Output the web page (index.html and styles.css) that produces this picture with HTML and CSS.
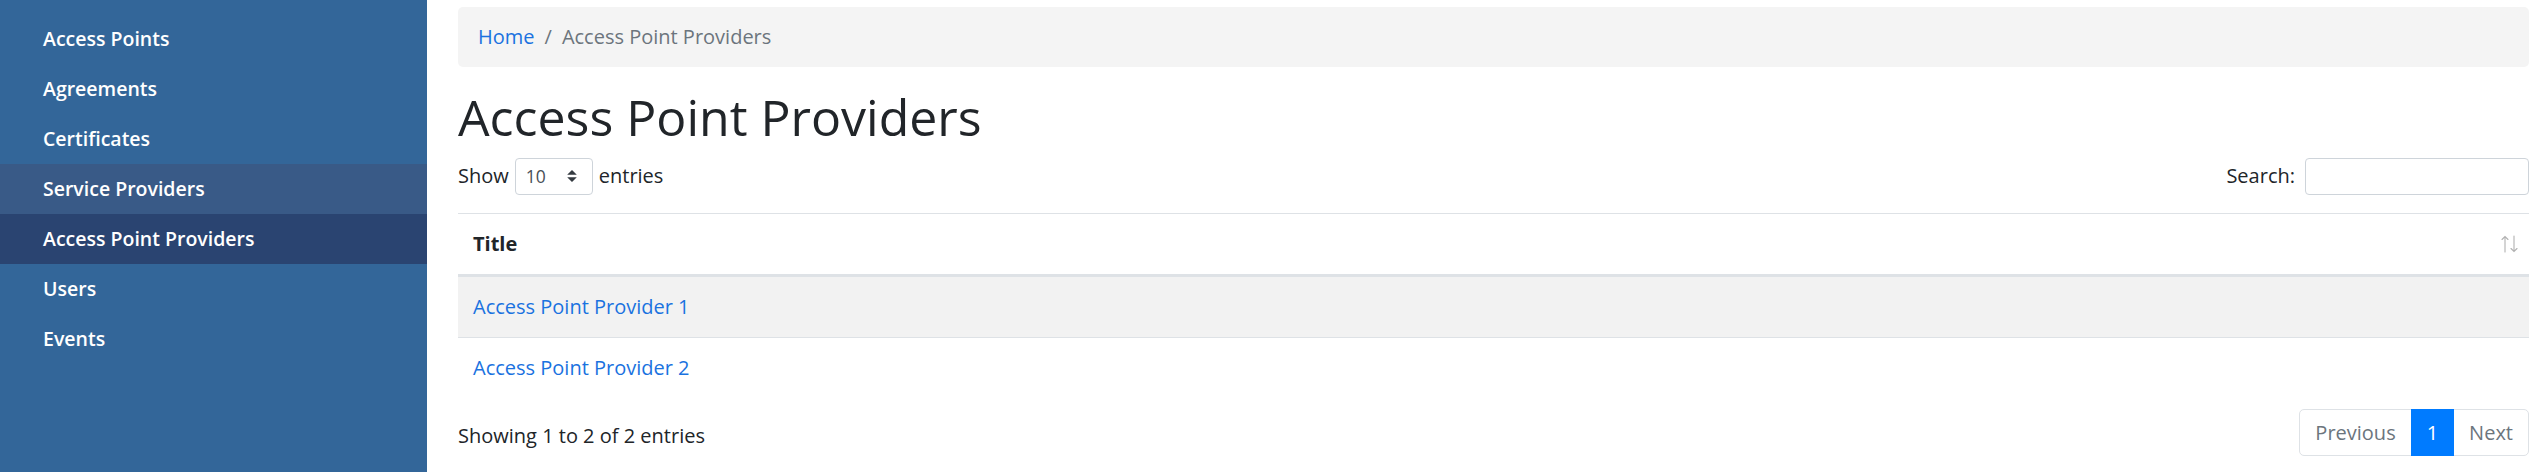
FILE: index.html
```html
<!DOCTYPE html>
<html lang="en">
<head>
<meta charset="utf-8">
<title>Access Point Providers</title>
<link rel="stylesheet" href="styles.css">
</head>
<body>
<div class="layout">
  <nav class="sidebar">
    <ul class="nav">
      <li><a class="nav-link" href="#">Access Points</a></li>
      <li><a class="nav-link" href="#">Agreements</a></li>
      <li><a class="nav-link" href="#">Certificates</a></li>
      <li><a class="nav-link hover" href="#">Service Providers</a></li>
      <li><a class="nav-link active" href="#">Access Point Providers</a></li>
      <li><a class="nav-link" href="#">Users</a></li>
      <li><a class="nav-link" href="#">Events</a></li>
    </ul>
  </nav>
  <main class="main">
    <ol class="breadcrumb">
      <li class="breadcrumb-item"><a href="#">Home</a></li>
      <li class="breadcrumb-item current">Access Point Providers</li>
    </ol>
    <h1 class="page-title">Access Point Providers</h1>
    <div class="controls">
      <div class="length">
        <span>Show</span>
        <div class="len-select"><span>10</span>
          <svg class="select-arrows" width="10" height="12" viewBox="0 0 4 5"><path d="M2 0L0 2h4zm0 5L0 3h4z" fill="#343a40"/></svg>
        </div>
        <span>entries</span>
      </div>
      <div class="filter">
        <span>Search:</span>
        <input class="search-input" type="text">
      </div>
    </div>
    <table class="data-table">
      <thead>
        <tr><th><div class="th-inner"><span>Title</span>
          <svg class="sort-icon" width="17" height="18" viewBox="0 0 17 18"><g fill="none" stroke="#000" stroke-width="1.1" stroke-linecap="round"><path d="M4 1.5V17M1 4.5L4 1.5L7 4.5"/><path d="M13 1V16.5M10 13.5L13 16.5L16 13.5"/></g></svg>
        </div></th></tr>
      </thead>
      <tbody>
        <tr class="odd"><td><a href="#">Access Point Provider 1</a></td></tr>
        <tr><td><a href="#">Access Point Provider 2</a></td></tr>
      </tbody>
    </table>
    <div class="table-footer">
      <div class="info">Showing 1 to 2 of 2 entries</div>
      <ul class="pagination">
        <li><a class="page-link first" href="#">Previous</a></li>
        <li><a class="page-link active" href="#">1</a></li>
        <li><a class="page-link last" href="#">Next</a></li>
      </ul>
    </div>
  </main>
</div>
</body>
</html>
```

FILE: styles.css
```css
html, body {
  margin: 0;
  padding: 0;
}
body {
  font-family: "Open Sans", "Noto Sans", sans-serif;
  font-size: 20px;
  line-height: 1.5;
  color: #212529;
  background: #fff;
}
a {
  color: #1a72e0;
  text-decoration: none;
}
.layout {
  display: flex;
  min-height: 100vh;
}
.sidebar {
  width: 427px;
  flex-shrink: 0;
  background: #336699;
  padding-top: 14px;
  box-sizing: border-box;
}
.nav {
  list-style: none;
  margin: 0;
  padding: 0;
}
.nav-link {
  display: block;
  height: 50px;
  line-height: 50px;
  padding: 0 43px;
  color: #fff;
  font-size: 19.5px;
  font-weight: 600;
}
.nav-link.hover {
  background: #395a87;
}
.nav-link.active {
  background: #2a4471;
}
.main {
  flex: 1;
  min-width: 0;
  padding: 7px 16px 0 31px;
}
.breadcrumb {
  display: flex;
  list-style: none;
  margin: 0 0 20px;
  padding: 15px 20px;
  background: #f4f4f4;
  border-radius: 5px;
}
.breadcrumb-item + .breadcrumb-item::before {
  content: "/";
  padding: 0 10px;
  color: #6c757d;
}
.breadcrumb-item.current {
  color: #6c757d;
}
.page-title {
  font-size: 50px;
  line-height: 60px;
  font-weight: 400;
  margin: 0 0 10px;
}
.controls {
  display: flex;
  justify-content: space-between;
  align-items: center;
  height: 38px;
  margin-bottom: 18px;
}
.length, .filter {
  display: flex;
  align-items: center;
  gap: 6px;
}
.len-select {
  box-sizing: border-box;
  width: 78px;
  height: 37px;
  border: 1px solid #ced4da;
  border-radius: 4px;
  padding: 0 15px 0 10px;
  display: flex;
  align-items: center;
  justify-content: space-between;
  font-size: 17.5px;
  color: #495057;
}
.filter {
  gap: 10px;
}
.search-input {
  box-sizing: border-box;
  width: 224px;
  height: 37px;
  border: 1px solid #ced4da;
  border-radius: 4px;
  margin: 0;
  padding: 0 10px;
  font: inherit;
  font-size: 17.5px;
}
.data-table {
  width: 100%;
  border-collapse: separate;
  border-spacing: 0;
}
.data-table th {
  text-align: left;
  font-weight: 700;
  padding: 15px 11px 15px 15px;
  border-top: 1px solid #dee2e6;
  border-bottom: 2px solid #dee2e6;
}
.th-inner {
  display: flex;
  justify-content: space-between;
  align-items: center;
}
.sort-icon {
  opacity: 0.3;
}
.data-table td {
  padding: 15px;
  border-top: 1px solid #dee2e6;
}
.data-table tr.odd td {
  background: #f2f2f2;
}
.table-footer {
  display: flex;
  justify-content: space-between;
  align-items: flex-start;
  margin-top: 11px;
}
.info {
  padding-top: 12px;
}
.pagination {
  display: flex;
  list-style: none;
  margin: 0;
  padding: 0;
}
.page-link {
  display: block;
  padding: 10px 15px;
  line-height: 25px;
  border: 1px solid #dee2e6;
  margin-left: -1px;
  color: #6c757d;
  background: #fff;
}
.page-link.first {
  margin-left: 0;
  border-radius: 5px 0 0 5px;
}
.page-link.last {
  border-radius: 0 5px 5px 0;
}
.page-link.active {
  position: relative;
  z-index: 1;
  background: #007bff;
  border-color: #007bff;
  color: #fff;
}
```
